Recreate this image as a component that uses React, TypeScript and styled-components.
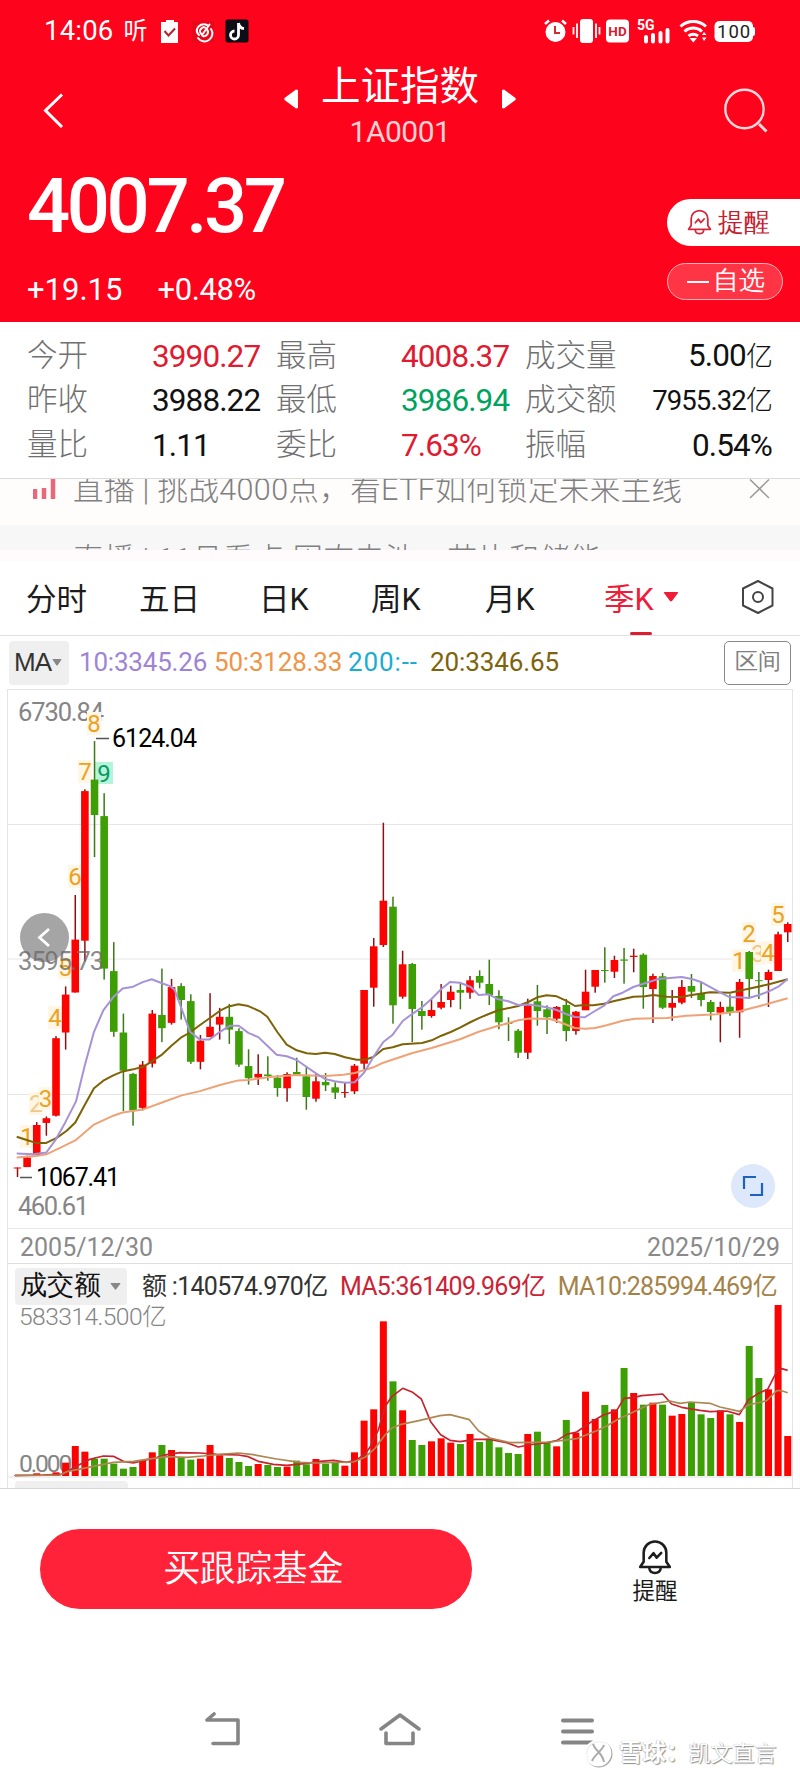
import React from "react";
import styled, { createGlobalStyle } from "styled-components";

const GlobalStyle = createGlobalStyle`
  * { box-sizing: border-box; }
  body {
    margin: 0;
    background: #fff;
    font-family: Roboto, "Noto Sans CJK SC", sans-serif;
    color: #1a1a1a;
  }
`;

const RED = "#e01a30";
const UP = "#fb0300";
const DOWN = "#3d9f05";

const Screen = styled.main`
  width: 800px;
  height: 1778px;
  background: #fff;
  overflow: hidden;
  display: flex;
  flex-direction: column;
`;

const Txt = styled.span<{ $size: number; $ls?: number; $color?: string; $weight?: number; $w?: number }>`
  display: inline-block;
  font-size: ${(p) => p.$size}px;
  line-height: 1;
  letter-spacing: ${(p) => p.$ls ?? 0}px;
  color: ${(p) => p.$color ?? "inherit"};
  font-weight: ${(p) => p.$weight ?? 400};
  width: ${(p) => (p.$w ? `${p.$w}px` : "auto")};
  white-space: pre;
`;

/* ---------- header ---------- */

const Header = styled.header`
  height: 322px;
  background: #fd031c;
  color: #fff;
  display: flex;
  flex-direction: column;
`;

const StatusBar = styled.div`
  height: 62px;
  padding: 0 44px 0 44px;
  display: flex;
  align-items: center;
  justify-content: space-between;
`;

const StatusSide = styled.div`
  display: flex;
  align-items: center;
  height: 26px;
  gap: 10px;
`;

const TitleBar = styled.div`
  height: 90px;
  padding: 0 30px 0 40px;
  display: flex;
  justify-content: space-between;
  align-items: flex-start;
`;

const NavIcon = styled.div`
  width: 48px;
  padding-top: 26px;
`;

const TitleGroup = styled.div`
  display: flex;
  align-items: flex-start;
  margin-right: 10px;
`;

const TitleText = styled.div`
  width: 204px;
  display: flex;
  flex-direction: column;
  align-items: center;
  padding-top: 5px;
  gap: 10px;
`;

const TitleArrow = styled.svg`
  margin-top: 27px;
`;

const PriceRow = styled.div`
  flex: 1;
  display: flex;
  justify-content: space-between;
`;

const PriceBlock = styled.div`
  padding: 16px 0 0 27px;
  display: flex;
  flex-direction: column;
  gap: 30px;
`;

const ChangeLine = styled.div`
  display: flex;
  gap: 35px;
`;

const PillColumn = styled.div`
  width: 133px;
  padding-top: 47px;
  display: flex;
  flex-direction: column;
  gap: 17px;
`;

const AlertPill = styled.button`
  height: 47px;
  border: 0;
  padding: 0 0 2px 20px;
  border-radius: 24px 0 0 24px;
  background: #fff;
  display: flex;
  align-items: center;
  gap: 6px;
`;

const WatchPill = styled.button`
  width: 116px;
  height: 37px;
  border: 1.5px solid #ffb3ba;
  padding: 0 0 3px 19px;
  border-radius: 19px;
  background: #ff3545;
  color: #fff;
  display: flex;
  align-items: center;
  gap: 4px;
`;

const Dash = styled.i`
  width: 22px;
  height: 2px;
  background: #fff;
  margin-top: 3px;
`;

/* ---------- quote table ---------- */

const Stats = styled.section`
  height: 157px;
  padding: 12px 28px 0 27px;
  display: grid;
  grid-template-columns: 125px 124px 125px 124px 110px 1fr;
  grid-auto-rows: 44.5px;
  align-items: center;
  border-bottom: 1px solid #dcdcdc;
`;

const StatLabel = styled.span`
  font-size: 30.5px;
  line-height: 44px;
  font-weight: 300;
  color: #707070;
  white-space: nowrap;
  padding-bottom: 1px;
`;

const StatValue = styled.span<{ $color?: string; $right?: boolean; $small?: boolean }>`
  font-size: ${(p) => (p.$small ? 27.5 : 31.5)}px;
  line-height: 44px;
  letter-spacing: -0.9px;
  color: ${(p) => p.$color ?? "#111"};
  justify-self: ${(p) => (p.$right ? "end" : "start")};
  white-space: nowrap;
  padding-top: 1px;
  small { font-size: 27px; font-weight: 300; }
`;

/* ---------- news ticker ---------- */

const Ticker = styled.section`
  height: 82px;
  display: flex;
  flex-direction: column;
  background: #fffbfc;
`;

const TickerLine = styled.div<{ $next?: boolean }>`
  height: ${(p) => (p.$next ? 25 : 46)}px;
  background: ${(p) => (p.$next ? "#f7f7f7" : "#fffcfc")};
  overflow: hidden;
  display: flex;
  align-items: flex-start;
  padding-left: 33px;
`;

const TickerText = styled.span<{ $offset: number }>`
  width: 676px;
  margin-top: ${(p) => p.$offset}px;
  font-size: 30.5px;
  letter-spacing: 0.38px;
  line-height: 36px;
  font-weight: 300;
  color: #808080;
  white-space: pre;
`;

const TickerIcon = styled.div`
  width: 40px;
  height: 24px;
`;

/* ---------- period tabs ---------- */

const Tabs = styled.nav`
  height: 75px;
  border-bottom: 1px solid #e0e0e0;
  padding: 0 25px 0 26px;
  display: flex;
  align-items: stretch;
`;

const Tab = styled.div<{ $w: number; $active?: boolean }>`
  width: ${(p) => p.$w}px;
  display: flex;
  align-items: center;
  gap: 9px;
  font-size: 30.5px;
  font-weight: 400;
  color: ${(p) => (p.$active ? "#ef1c37" : "#1c1c1c")};
  position: relative;
  white-space: nowrap;
  padding-bottom: 2px;
`;

const ActiveMark = styled.i`
  position: absolute;
  left: 26px;
  bottom: 0;
  width: 22px;
  height: 3px;
  border-radius: 2px;
  background: ${RED};
`;

/* ---------- chart ---------- */

const MaRow = styled.div`
  height: 53px;
  padding: 4px 9px 4px;
  display: flex;
  align-items: center;
`;

const Dropdown = styled.button<{ $w: number; $h: number }>`
  flex: none;
  width: ${(p) => p.$w}px;
  height: ${(p) => p.$h}px;
  border: 0;
  border-radius: 4px;
  background: #efefef;
  color: #333;
  padding: 0 0 2px 5px;
  display: flex;
  align-items: center;
`;

const DropdownCaret = styled.span<{ $gap: number }>`
  display: flex;
  margin: 2px 0 0 ${(p) => p.$gap}px;
`;

const MaValues = styled.div`
  flex: 1;
  padding: 0 0 2px 10px;
  display: flex;
`;

const RangeButton = styled.button`
  width: 67px;
  height: 44px;
  border: 1.5px solid #888;
  border-radius: 5px;
  background: #fff;
  padding: 0 0 2px;
  color: #808080;
`;

const ChartFrame = styled.section`
  margin: 0 7px 0 7px;
  height: 799px;
  border: solid #e4e4e4;
  border-width: 1px 1px 0;
  position: relative;
  display: flex;
  flex-direction: column;
  overflow: hidden;
`;

const PricePlot = styled.svg`
  display: block;
  flex: none;
`;

const BackButton = styled.button`
  position: absolute;
  left: 12px;
  top: 223px;
  width: 49px;
  height: 49px;
  border: 0;
  border-radius: 50%;
  background: #a5a5a5;
  padding: 0;
`;

const MidLabel = styled.svg`
  position: absolute;
  left: 0;
  top: 257px;
`;

const ExpandButton = styled.button`
  position: absolute;
  right: 17px;
  top: 474px;
  width: 44px;
  height: 44px;
  border: 0;
  border-radius: 50%;
  background: #dde8fa;
  padding: 0;
`;

const DateRow = styled.div`
  height: 35px;
  padding: 2px 12px 0 12px;
  display: flex;
  align-items: center;
  justify-content: space-between;
  border-bottom: 1px solid #dedede;
`;

const VolumeHead = styled.div`
  height: 41px;
  padding: 4px 0 0 7px;
  display: flex;
  align-items: center;
`;

const VolumeValues = styled.div`
  flex: 1;
  padding: 0 15px 0 15px;
  display: flex;
  justify-content: space-between;
`;

const NextPanel = styled.div`
  height: 7px;
  padding: 3px 0 0 7px;
`;

const NextPanelTab = styled.i`
  display: block;
  width: 113px;
  height: 10px;
  border-radius: 4px;
  background: #efefef;
`;

/* ---------- footer ---------- */

const Actions = styled.footer`
  border-top: 1px solid #d8d8d8;
  height: 160px;
  padding: 0 0 0 40px;
  display: flex;
  align-items: flex-start;
`;

const BuyButton = styled.button`
  margin-top: 40px;
  width: 432px;
  height: 80px;
  border: 0;
  border-radius: 40px;
  background: #ff2238;
  color: #fff;
  padding: 0 4px 0 0;
`;

const AlertAction = styled.div`
  margin-top: 50px;
  margin-left: 133px;
  width: 100px;
  display: flex;
  flex-direction: column;
  align-items: center;
  gap: 5px;
`;

const SystemNav = styled.div`
  flex: 1;
  position: relative;
  display: flex;
  align-items: flex-start;
  padding: 64px 0 0 203px;
`;

const Watermark = styled.div`
  position: absolute;
  left: 584px;
  top: 91px;
  display: flex;
  align-items: center;
  gap: 6px;
  color: #fff;
  text-shadow: 1px 1px 1px #8c8c8c, -0.5px -0.5px 1px #bbb;
`;

const Author = styled.span`
  font-size: 22px;
  line-height: 1;
  margin-left: -7px;
`;

/* ---------- data ---------- */

// [high, bodyTop, bodyBottom, low, rising, turnover]
type Quarter = [number, number, number, number, 0 | 1, number];

const quarters: Quarter[] = [
  [1167.5, 1167.5, 1168.5, 1177, 1, 2], [1155.7, 1157.5, 1167.1, 1167, 1, 3],
  [1122.1, 1125, 1155, 1155, 1, 8], [1116.4, 1118.2, 1122.9, 1135.7, 1, 5],
  [1036.1, 1038.2, 1115.7, 1116.5, 1, 11], [986.4, 994.6, 1032.5, 1049.6, 1, 40],
  [895, 939.6, 992.5, 992.5, 1, 90], [789.3, 791.1, 940.7, 961.4, 1, 73],
  [741.1, 779.6, 815, 857.1, 0, 51], [793.2, 816.1, 968.6, 979.6, 0, 52],
  [942.1, 971.1, 1031.8, 1036.8, 0, 37], [1013.6, 1032.5, 1070.7, 1111.1, 0, 22],
  [1072.9, 1073.9, 1110.4, 1125.7, 0, 27], [1061.1, 1064.6, 1107.9, 1110.4, 1, 46],
  [1010, 1013.6, 1063.6, 1067.5, 1, 71], [968.6, 1015, 1028.2, 1042.1, 0, 93],
  [978.9, 987.1, 1022.9, 1024.6, 1, 78], [983.2, 986.1, 1000, 1019.6, 0, 54],
  [994.3, 1001.1, 1061.8, 1063.9, 0, 49], [1035, 1040.7, 1061.8, 1069.3, 1, 52],
  [993.2, 1026.8, 1037.1, 1037, 1, 93], [1007.9, 1016.8, 1024.6, 1039.6, 1, 62],
  [1003.9, 1016.8, 1029.6, 1043.9, 0, 54], [1028.2, 1031.1, 1064.6, 1066.8, 0, 42],
  [1049.3, 1066.1, 1078.2, 1084.6, 0, 30], [1054.3, 1073.9, 1077.5, 1085, 1, 36],
  [1056.3, 1074.5, 1076, 1080.7, 0, 33], [1075, 1077.7, 1088, 1096.7, 0, 27],
  [1072.3, 1074, 1088.3, 1101.7, 1, 28], [1057.7, 1072, 1074.7, 1075, 0, 46],
  [1067, 1076.3, 1097, 1109.7, 0, 35], [1073.3, 1081.3, 1098.7, 1101.7, 1, 51],
  [1073, 1082, 1085.3, 1091, 0, 37], [1082.3, 1087.3, 1092.7, 1099, 0, 39],
  [1082.3, 1092, 1093, 1097.7, 1, 31], [1064, 1065.7, 1091.3, 1094, 1, 71],
  [990, 990, 1063.7, 1069.3, 1, 166], [938, 946.3, 987.7, 1006.7, 1, 200],
  [822.7, 900.7, 945, 947, 1, 464], [896.7, 906.7, 1005.3, 1023.7, 0, 284],
  [950.7, 964.3, 996.7, 998.7, 1, 197], [963, 964, 1009, 1042, 0, 108],
  [1001, 1011, 1016, 1029.7, 0, 93], [999.3, 1010, 1016, 1017.7, 1, 104],
  [984, 1002, 1007.7, 1009.3, 1, 113], [985.7, 991.7, 1000, 1007.3, 1, 100],
  [982, 990, 992.7, 1009.3, 0, 96], [976, 980.3, 992.7, 998.7, 1, 126],
  [970.3, 976, 982.7, 988.3, 0, 102], [959.7, 984, 995, 1005, 0, 112],
  [990.3, 996, 1022.3, 1029.3, 0, 86], [1017.3, 1022.8, 1024, 1041, 0, 69],
  [1029, 1030.7, 1052.7, 1058, 0, 66], [998.7, 1005.3, 1052.7, 1059, 1, 126],
  [985, 1001.3, 1011, 1025.7, 0, 133], [1005.3, 1009.3, 1017.3, 1034, 0, 100],
  [1006, 1007, 1018.7, 1023, 1, 89], [999, 1005, 1031, 1041.3, 0, 168],
  [1011, 1011.7, 1031, 1034.7, 1, 130], [969.7, 991.7, 1010.3, 1010, 1, 253],
  [970, 970, 986.7, 992.7, 1, 171], [947.3, 970, 971, 982.7, 0, 213],
  [955.7, 960, 971.7, 978, 1, 200], [948, 959.5, 960.7, 983.7, 0, 324],
  [948.7, 955.7, 957, 972.3, 1, 249], [953.3, 954.7, 987, 1008.7, 0, 214],
  [973.7, 976, 989, 1023, 1, 220], [973, 976.3, 1007.7, 1009, 0, 214],
  [990, 1003, 1007.7, 1020.7, 1, 181], [980, 987, 1002.7, 1004.3, 1, 186],
  [974, 986, 991.7, 998, 0, 222], [982.7, 993, 1000, 1006.3, 0, 185],
  [1000, 1002, 1012, 1020.3, 0, 174], [1001.7, 1007, 1012.7, 1042.3, 1, 197],
  [994.3, 1006.7, 1012, 1015.7, 0, 185], [979, 982, 1012.3, 1037.7, 1, 162],
  [951, 952, 979, 998.3, 0, 390], [972, 980.2, 981, 999, 0, 294],
  [969.7, 972, 980, 1007, 1, 260], [931.7, 934.3, 971, 971, 1, 513],
  [922.3, 924, 932.3, 942, 1, 120],
];

const STEP = 9.628;
const xAt = (i: number) => 17.5 + i * STEP;

const ma10 =
  "16.7,1153.6 33.3,1154.3 46.3,1152.5 55,1140.7 65,1122.9 76,1101.4 84.7,1065.7 94,1031.8 103.3,1010.4 113.3,997.1 122.7,988.6 132,987.1 142.7,982.1 151.7,979.3 162,983.2 170.7,986.4 174.7,990 190,1031.8 200,1039.6 209.3,1039.6 220,1031.8 230,1025.7 238.7,1025.7 248.3,1032.9 258.3,1037.1 267.3,1045.7 276.7,1054.7 286.7,1056.3 296.7,1060 306.7,1067 316,1073.3 325,1079 334.7,1081.3 345,1082.7 354.7,1082.3 364,1072.7 374,1056 383.3,1042 392.7,1034.7 402.7,1021 411.7,1014.3 422,1007.3 431.7,998.7 441.3,989 450,982 460,982.7 470.7,987 478.7,995 488.7,994.3 498.3,999.3 508.3,1001.3 518.3,1005 530,1004.5 546.7,1007.3 556.7,1010 566,1014 575,1017 584.7,1017.3 593.3,1012 604,1005.7 613.3,996.3 622.7,992.7 633.3,987 645,983.3 658.3,979 672.7,977.7 681.7,977 692,979 701.7,982.3 720,992.3 730,997.3 739.3,997.3 748.7,998 760,994.7 769,991.3 778.3,986.7 787.7,979";
const ma20 =
  "16.7,1136.8 26.7,1140 36,1142.9 46.3,1142.9 56.7,1137.9 66.7,1130.7 75.3,1122.5 84.7,1105 94,1088.2 103.3,1080.7 113.3,1075.4 122.7,1071.4 132,1069.6 143.3,1066.8 151.7,1061.4 162,1054.6 171.7,1045.4 181.7,1037.1 190,1032.5 200,1025 210.7,1017.5 220,1010.7 228.7,1006.4 238.3,1004.3 248.3,1006.1 260,1011.3 267.3,1016.7 277.3,1032 286.7,1044.7 296.7,1050.3 306.7,1053.3 316,1054 325,1052.7 334.7,1054 345,1057.3 356.7,1059.7 365,1059.7 373.3,1057 383.3,1049 392.7,1047.3 402.7,1044.3 422,1043 431.7,1040.3 441.3,1035.7 450.7,1032 460,1027.7 470.7,1022 480,1017.7 488.7,1014 498.3,1010.3 518.3,1006 529.3,1001.5 537.3,997.3 546.7,995.3 556.7,996.3 566,1000.7 575,1006 581.7,1005.3 593.3,1005.3 604,1003.7 613.3,1001.3 633.3,996.7 645,996.3 653.3,995 666.7,996.7 681.7,997 690,995.3 710,992.3 730,992.7 739.3,990.7 748.7,988.7 769,984.3 778.3,981.7 787.7,979.3";
const ma50 =
  "16.7,1157.5 36,1156 46.3,1154.3 60,1147.9 75.3,1140.4 94,1124.6 113.3,1115.7 122.7,1112.5 142.7,1109.6 162,1102.5 181.7,1095.4 200,1091.1 220,1085 238.3,1080.4 248.3,1080 269.3,1077.1 296.7,1075 325,1076 343.3,1074.7 354.7,1073 373.3,1067.3 383.3,1062.7 411.7,1053.3 431.7,1048 460,1039.3 478.7,1031.7 498.3,1025.7 508.3,1023.3 518.3,1020.3 529.3,1018.5 550,1019 560,1022.3 575,1028 585,1028.7 595,1028 606.7,1025.3 622.7,1020.7 635,1018.7 666.7,1018 686.7,1015.7 716.7,1014.3 739.3,1011.3 760,1006 773.3,1002.3 787.7,998.3";

// turnover averages, in thirds of a pixel
const volMa5 =
  "45,766 130,765 190,762 226,740 270,718 310,708 340,709 370,724 400,729 428,722 470,713 500,704 540,698 600,699 650,703 715,705 745,710 775,724 820,733 860,736 920,730 960,724 1000,721 1040,727 1070,720 1095,702 1110,682 1135,630 1155,560 1175,530 1208,505 1238,517 1264,537 1292,605 1322,644 1350,661 1380,665 1425,658 1470,658 1520,668 1555,681 1585,675 1640,668 1670,662 1700,643 1730,636 1775,605 1810,585 1850,572 1872,535 1900,533 1925,527 1988,522 2015,552 2045,562 2100,571 2130,575 2180,573 2218,584 2245,540 2275,520 2303,508 2330,455 2345,446 2363,451";
const volMa10 =
  "45,767 180,765 200,755 250,745 310,733 340,727 400,724 455,716 500,710 560,712 610,708 670,702 715,699 760,704 830,717 900,727 950,729 1060,726 1095,712 1125,685 1155,645 1175,625 1200,614 1260,601 1320,587 1350,584 1408,599 1436,633 1470,654 1530,668 1600,667 1650,666 1730,656 1790,632 1820,618 1850,600 1900,576 1950,553 2010,543 2040,550 2070,546 2130,550 2160,561 2218,574 2245,555 2300,542 2330,512 2345,512 2363,518";

const turns = [
  { n: "1", x: 27, y: 1136 }, { n: "2", x: 36, y: 1103, faded: true }, { n: "3", x: 45.5, y: 1098 },
  { n: "4", x: 55, y: 1017 }, { n: "5", x: 65, y: 967 }, { n: "6", x: 75, y: 876 },
  { n: "7", x: 85, y: 771 }, { n: "8", x: 94, y: 723 },
  { n: "1", x: 739, y: 960 }, { n: "2", x: 749, y: 933 }, { n: "3", x: 758, y: 953, faded: true },
  { n: "4", x: 768, y: 952 }, { n: "5", x: 778, y: 914 },
];

const stats: { label: string; value: React.ReactNode; color?: string; small?: boolean }[] = [
  { label: "今开", value: "3990.27", color: RED },
  { label: "最高", value: "4008.37", color: RED },
  { label: "成交量", value: <>5.00<small>亿</small></> },
  { label: "昨收", value: "3988.22" },
  { label: "最低", value: "3986.94", color: "#00a35e" },
  { label: "成交额", value: <>7955.32<small>亿</small></>, small: true },
  { label: "量比", value: "1.11" },
  { label: "委比", value: "7.63%", color: RED },
  { label: "振幅", value: "0.54%" },
];

/* ---------- pieces ---------- */

const Bell = ({ w, h, color, sw }: { w: number; h: number; color: string; sw: number }) => (
  <svg width={w} height={h} viewBox="0 0 24 25" fill="none" stroke={color} strokeWidth={sw} strokeLinecap="round" strokeLinejoin="round">
    <path d="M1.500 19.500H22.500L20 15.800V9.500A8 8 0 0 0 4 9.500V15.800Z" />
    <path d="M8 20.500C8.600 24.800 15.400 24.800 16 20.500" />
    <path d="M8 13.200L11 9.800L13.200 13L16.400 9.600" />
  </svg>
);

const Caret = ({ w, h, color }: { w: number; h: number; color: string }) => (
  <svg width={w} height={h} viewBox="0 0 16 11" preserveAspectRatio="none">
    <path d="M1 1.200Q0 0 2 0H14Q16 0 15 1.200L9 10Q8 11 7 10Z" fill={color} />
  </svg>
);

const StatusIconsLeft = () => (
  <svg width="96" height="26" viewBox="0 0 96 26">
    <path d="M4 4H9V2H17V4H21V25H4Z" fill="#fff" />
    <path d="M7.500 13L11.500 17.500L18 10.500" fill="none" stroke="#b0232f" strokeWidth="2" />
    <rect x="35" y="3" width="22" height="22" rx="3" fill="#e80819" />
    <g fill="none" stroke="#fff" strokeWidth="2" strokeLinecap="round">
      <path d="M50 7A7.200 7.200 0 0 0 40 11A6 6 0 0 0 42 17" />
      <path d="M48 9.500A4 4 0 0 0 43 14L45 17L52.500 6.500" />
      <path d="M54 11A7.500 7.500 0 0 1 41 20" />
      <path d="M50 11.500A4 4 0 0 1 46 18" />
    </g>
    <rect x="68.500" y="1.500" width="23" height="23" rx="2" fill="#0d0d16" />
    <path d="M81.500 5V17A4 4 0 1 1 77.500 13M81.500 5C82 8.500 84 10.300 87 10.600" fill="none" stroke="#fff" strokeWidth="2.800" />
  </svg>
);

const StatusIconsRight = () => (
  <svg width="212" height="28" viewBox="0 0 212 28">
    <circle cx="11.500" cy="15" r="10" fill="#fff" />
    <path d="M1 7L5 3.500M22 7L18 3.500" stroke="#fff" strokeWidth="2.600" />
    <path d="M11 9V16H16" fill="none" stroke="#d32a33" strokeWidth="2" />
    <rect x="36" y="2" width="13" height="24" rx="3" fill="#fff" />
    <path d="M33 6.500V21M29.500 10V17.500M52 6.500V21M55.500 10V17.500" stroke="#fff" strokeWidth="1.800" />
    <rect x="62" y="2.500" width="23" height="23" rx="4" fill="#fff" />
    <text x="73.500" y="19" fontSize="13.500" fontWeight="700" textAnchor="middle" fill="#d1242f">HD</text>
    <text x="93" y="13.200" fontSize="14" fontWeight="700" fill="#fff">5G</text>
    <path d="M102 20V24.500M109 18V24.500M116.500 16V24.500M123.500 13V24.500" stroke="#fff" strokeWidth="4" strokeLinecap="round" />
    <g fill="none" stroke="#fff" strokeWidth="3">
      <path d="M136.500 9.500A19 19 0 0 1 162 9.500" />
      <path d="M140.500 14.500A13 13 0 0 1 158 14.500" />
      <path d="M144.500 19A8 8 0 0 1 154 19" />
    </g>
    <path d="M145.500 21H153L149.300 25.500Z" fill="#fff" />
    <path d="M158 18L160 15L162.500 18ZM158 20.500L160 24L162.500 20.500Z" fill="#fff" />
    <rect x="170.500" y="4" width="38.500" height="21" rx="5" fill="#fff" />
    <rect x="207" y="10" width="4" height="9" rx="2" fill="#fff" />
    <text x="189.600" y="21" fontSize="18.500" textAnchor="middle" fill="#222" textLength="33">100</text>
  </svg>
);

const PriceChart = () => (
  <PricePlot width={784} height={539} viewBox="8 690 784 539" fontSize="25">
    <path d="M8 824.500H792M8 959H792M8 1094.500H792M8 1228.500H792" stroke="#e6e6e6" strokeWidth="1" />
    <g fill="#858585" fontSize="25.500">
      <text x="18" y="721" textLength="86">6730.84</text>
      <text x="18" y="1215" textLength="71">460.61</text>
    </g>
    {turns.map((t, i) => (
      <g key={i}>
        <rect x={t.x - 7} y={t.y - 11} width="14" height="23" fill="#fff6e6" />
        <text x={t.x} y={t.y + 9} fontSize="24" textAnchor="middle" fill={t.faded ? "#f0c98a" : "#eda11d"}>{t.n}</text>
      </g>
    ))}
    <rect x="95" y="762" width="18" height="22" fill="#b5f3da" />
    <text x="104" y="782" fontSize="24" textAnchor="middle" fill="#0a9a62">9</text>
    {quarters.map(([hi, top, bottom, low, rising], i) => (
      <g key={i}>
        <rect x={xAt(i) - 0.75} y={hi} width="1.500" height={low - hi} fill={rising ? "#8f0f12" : "#3c7a17"} />
        <rect x={xAt(i) - 3.800} y={top} width="7.600" height={Math.max(1, bottom - top)} fill={rising ? UP : DOWN} />
      </g>
    ))}
    <g fill="none" strokeWidth="2" strokeLinejoin="round">
      <polyline points={ma20} stroke="#7d6206" />
      <polyline points={ma50} stroke="#eea276" />
      <polyline points={ma10} stroke="#a692d6" />
    </g>
    <path d="M96 738.500H109M20 1177.500H32" stroke="#555" strokeWidth="1.300" />
    <text x="112" y="747" fill="#000" textLength="85">6124.04</text>
    <text x="36" y="1186" fill="#000" textLength="84">1067.41</text>
  </PricePlot>
);

const VolumeChart = () => (
  <PricePlot width={784} height={173} viewBox="24 255 2352 519">
    <path d="M24 771H2376" stroke="#e0e0e0" strokeWidth="3" />
    <text x="57" y="316" fontSize="74" fill="#858585" textLength="443" fontWeight="300">583314.500亿</text>
    <text x="57" y="756" fontSize="74" fill="#858585" textLength="160">0.000</text>
    {quarters.map(([, , , , rising, turnover], i) => (
      <rect key={i} x={xAt(i) * 3 - 10.500} y={768 - turnover} width="21" height={turnover} fill={rising ? UP : DOWN} />
    ))}
    <g fill="none" strokeWidth="5" strokeLinejoin="round">
      <polyline points={volMa5} stroke="#c9222c" />
      <polyline points={volMa10} stroke="#ad8752" />
    </g>
  </PricePlot>
);

export default function App() {
  return (
    <Screen>
      <GlobalStyle />
      <Header>
        <StatusBar>
          <StatusSide>
            <Txt $size={27.5} $ls={0.2}>14:06</Txt>
            <Txt $size={24} $weight={400}>听</Txt>
            <StatusIconsLeft />
          </StatusSide>
          <StatusSide><StatusIconsRight /></StatusSide>
        </StatusBar>
        <TitleBar>
          <NavIcon>
            <svg width="26" height="46" viewBox="0 0 26 46"><path d="M22 6.500L5.500 22.500L22 39" fill="none" stroke="#fff" strokeWidth="3" /></svg>
          </NavIcon>
          <TitleGroup>
            <TitleArrow width="14" height="20" viewBox="0 0 14 20"><path d="M14 1V19L12 19.500L0.500 11Q0 10 0.500 9L12 0.500Z" fill="#fff" /></TitleArrow>
            <TitleText>
              <Txt $size={39.5}>上证指数</Txt>
              <Txt $size={30} $ls={-0.5} $color="#ffd0d4">1A0001</Txt>
            </TitleText>
            <TitleArrow width="14" height="20" viewBox="0 0 14 20"><path d="M0 1V19L2 19.500L13.500 11Q14 10 13.500 9L2 0.500Z" fill="#fff" /></TitleArrow>
          </TitleGroup>
          <NavIcon>
            <svg width="46" height="48" viewBox="0 0 46 48" fill="none" stroke="#ffd9dc" strokeWidth="2.400">
              <circle cx="22.500" cy="21" r="19.200" /><path d="M37 36L44.500 43.500" strokeWidth="3" />
            </svg>
          </NavIcon>
        </TitleBar>
        <PriceRow>
          <PriceBlock>
            <Txt $size={76} $ls={-3.4} $weight={500}>4007.37</Txt>
            <ChangeLine>
              <Txt $size={31} $ls={0}>+19.15</Txt>
              <Txt $size={31} $ls={-0.4}>+0.48%</Txt>
            </ChangeLine>
          </PriceBlock>
          <PillColumn>
            <AlertPill><Bell w={25} h={26} color="#d5263a" sw={1.7} /><Txt $size={26} $weight={300} $color="#c5202f">提醒</Txt></AlertPill>
            <WatchPill><Dash /><Txt $size={26}>自选</Txt></WatchPill>
          </PillColumn>
        </PriceRow>
      </Header>

      <Stats>
        {stats.map((s, i) => (
          <React.Fragment key={s.label}>
            <StatLabel>{s.label}</StatLabel>
            <StatValue $color={s.color} $right={i % 3 === 2} $small={s.small}>{s.value}</StatValue>
          </React.Fragment>
        ))}
      </Stats>

      <Ticker>
        <TickerLine>
          <TickerIcon>
            <svg width="24" height="21" viewBox="0 0 24 21"><path d="M2 10V20M11 9V20M20 0V20" stroke="#e8687a" strokeWidth="4.500" /></svg>
          </TickerIcon>
          <TickerText $offset={-7}>直播 | 挑战4000点，看ETF如何锁定未来主线</TickerText>
          <svg width="22" height="20" viewBox="0 0 22 20"><path d="M1 0.500L20 19M20 0.500L1 19" stroke="#999" strokeWidth="1.500" /></svg>
        </TickerLine>
        <TickerLine $next>
          <TickerIcon />
          <TickerText $offset={17}>直播 | 11月看点 固态电池、芯片和储能</TickerText>
        </TickerLine>
      </Ticker>

      <Tabs>
        <Tab $w={113}>分时</Tab>
        <Tab $w={120}>五日</Tab>
        <Tab $w={112}>日K</Tab>
        <Tab $w={114}>周K</Tab>
        <Tab $w={119}>月K</Tab>
        <Tab $w={137} $active>季K<Caret w={16} h={10} color="#ef1c37" /><ActiveMark /></Tab>
        <Tab $w={34}>
          <svg width="34" height="36" viewBox="0 0 34 36" fill="none" stroke="#444" strokeWidth="2" strokeLinejoin="round">
            <path d="M17 2L31.500 9.500V26.500L17 34L2 26.500V9.500Z" /><circle cx="17" cy="18" r="5" />
          </svg>
        </Tab>
      </Tabs>

      <MaRow>
        <Dropdown $w={60} $h={44}><Txt $size={26} $ls={-0.8}>MA</Txt><DropdownCaret $gap={1}><Caret w={10} h={7} color="#888" /></DropdownCaret></Dropdown>
        <MaValues>
          <Txt $size={26} $ls={-0.2} $w={135} $color="#a084d4">10:3345.26</Txt>
          <Txt $size={26} $ls={-0.2} $w={134} $color="#ee9548">50:3128.33</Txt>
          <Txt $size={26} $ls={0.9} $w={82} $color="#19add0">200:--</Txt>
          <Txt $size={26} $ls={-0.1} $color="#80620a">20:3346.65</Txt>
        </MaValues>
        <RangeButton><Txt $size={23} $weight={300}>区间</Txt></RangeButton>
      </MaRow>

      <ChartFrame>
        <PriceChart />
        <BackButton>
          <svg width="49" height="49" viewBox="0 0 49 49"><path d="M29 16L19.500 24.500L29 33" fill="none" stroke="#fff" strokeWidth="2.800" /></svg>
        </BackButton>
        <MidLabel width={110} height={30}>
          <text x="10" y="23" fontSize="25.500" fill="#6a6a6acc" textLength="86">3595.73</text>
        </MidLabel>
        <ExpandButton>
          <svg width="44" height="44" viewBox="0 0 44 44" fill="none" stroke="#1e62c0" strokeWidth="2.200"><path d="M13 25V13H25M31 19V31H19" /></svg>
        </ExpandButton>
        <DateRow>
          <Txt $size={25} $color="#8a8a8a">2005/12/30</Txt>
          <Txt $size={25} $color="#8a8a8a">2025/10/29</Txt>
        </DateRow>
        <VolumeHead>
          <Dropdown $w={112} $h={37}><Txt $size={26.5} $color="#111">成交额</Txt><DropdownCaret $gap={9}><Caret w={11} h={7} color="#888" /></DropdownCaret></Dropdown>
          <VolumeValues>
            <Txt $size={25} $ls={-0.7} $color="#333">额 :140574.970亿</Txt>
            <Txt $size={25} $ls={-0.75} $color="#cb2335">MA5:361409.969亿</Txt>
            <Txt $size={25} $ls={-0.7} $color="#a58348">MA10:285994.469亿</Txt>
          </VolumeValues>
        </VolumeHead>
        <VolumeChart />
        <NextPanel><NextPanelTab /></NextPanel>
      </ChartFrame>

      <Actions>
        <BuyButton><Txt $size={35.5}>买跟踪基金</Txt></BuyButton>
        <AlertAction>
          <Bell w={34} h={36} color="#1d1d1d" sw={1.8} />
          <Txt $size={22.5} $weight={400}>提醒</Txt>
        </AlertAction>
      </Actions>

      <SystemNav>
        <svg width="400" height="36" viewBox="0 0 400 36" fill="none" stroke="#858585" strokeWidth="3.600" strokeLinecap="round" strokeLinejoin="round">
          <path d="M11 2L4 8H35V31.500H10" />
          <path d="M178 17L197 3L216 17M183 21V31.500H210V21" />
          <path d="M360 8.500H389M360 19.500H389M360 30.500H389" strokeWidth="4" />
        </svg>
        <Watermark>
          <svg width="29" height="29" viewBox="0 0 29 29" fill="none">
            <circle cx="15" cy="15" r="12.500" stroke="#aaa" strokeWidth="2" />
            <circle cx="14" cy="14" r="12.500" fill="#ffffffd0" stroke="#fff" strokeWidth="1.600" />
            <path d="M9 5C11 12 18 13 20 23M20 6C18 12 11 15 8 22" stroke="#aaa" strokeWidth="2" />
          </svg>
          <Txt $size={23.5} $weight={700}>雪球：</Txt>
          <Author>凯文直言</Author>
        </Watermark>
      </SystemNav>
    </Screen>
  );
}
